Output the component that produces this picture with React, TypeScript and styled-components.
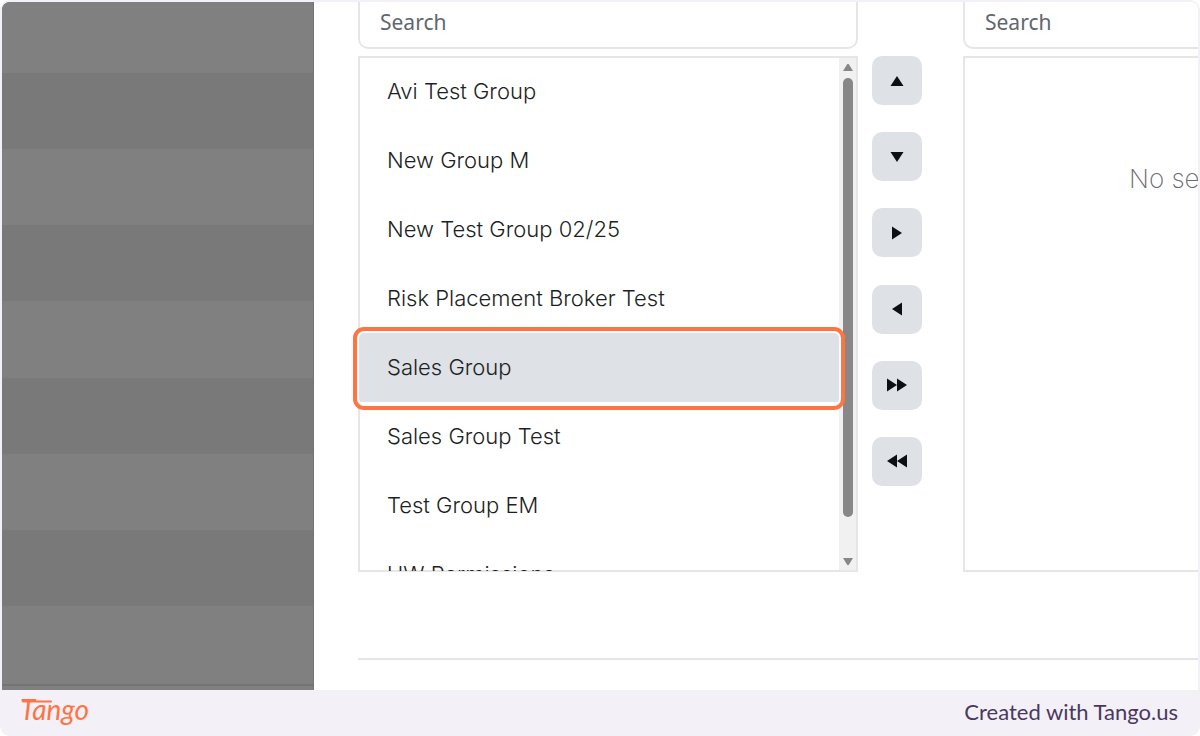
import React from "react";
import styled, { createGlobalStyle } from "styled-components";

const GlobalStyle = createGlobalStyle`
  *, *::before, *::after { box-sizing: border-box; }
  body { margin: 0; background: #fff; font-family: Inter, sans-serif; }
`;

const Frame = styled.div`
  display: flex;
  flex-direction: column;
  min-height: 100vh;
  padding: 2px 2px 0;
  background: #f3f1f7;
  border-radius: 10px;
`;

const Stage = styled.div`
  display: flex;
  flex: 1;
  background: #fff;
  border-radius: 8px 8px 0 0;
  overflow: hidden;
`;

const Backdrop = styled.div`
  display: grid;
  flex: 0 0 312px;
  grid-template-rows: 71px repeat(7, 1fr) 78px 6px;
  background: #808080;
  border-right: 1px solid #747474;
`;

const Stripe = styled.div<{ $dark?: boolean; $ruled?: boolean }>`
  background: ${(p) => (p.$dark ? "#797979" : "#808080")};
  border-top: ${(p) => (p.$ruled ? "2px solid #747474" : "0")};
`;

const Dialog = styled.main`
  flex: 1;
  min-width: 0;
  padding-left: 44px;
`;

const Transfer = styled.div`
  display: grid;
  grid-template-columns: minmax(0, 1fr) 50px 262px;
  column-gap: 14px;
  padding-bottom: 86px;
  border-bottom: 2px solid #e2e6eb;
`;

const Pane = styled.section<{ $cut?: boolean }>`
  display: flex;
  flex-direction: column;
  gap: 7px;
  margin-left: ${(p) => (p.$cut ? "27px" : "0")};
`;

const SearchBox = styled.input<{ $cut?: boolean }>`
  width: 100%;
  height: 47px;
  padding: 0 20px 5px;
  border: 2px solid #e6e6e6;
  border-top: 0;
  border-right-width: ${(p) => (p.$cut ? "0" : "2px")};
  border-radius: ${(p) => (p.$cut ? "0 0 0 10px" : "0 0 10px 10px")};
  outline: 0;
  background: #fff;
  font: 400 21px "Noto Sans", sans-serif;
  &::placeholder { color: #5f666d; opacity: 1; }
`;

const Box = styled.div<{ $cut?: boolean }>`
  display: flex;
  height: 516px;
  border: ${(p) => (p.$cut ? "2px" : "1px")} solid #e6e6e6;
  border-right-width: ${(p) => (p.$cut ? "0" : "1px")};
  box-shadow: ${(p) => (p.$cut ? "none" : "inset 0 0 0 1px #e6e6e6")};
`;

const Options = styled.ul`
  flex: 1;
  margin: 0;
  padding: 0;
  list-style: none;
  overflow-x: visible;
  overflow-y: clip;
`;

const Option = styled.li`
  position: relative;
  height: 69px;
  padding-left: 28px;
  font-size: 22px;
  font-weight: 300;
  line-height: 68px;
  color: #1c1f23;
  &[aria-selected="true"] { background: #dee1e6; }
`;

const Highlight = styled.span`
  position: absolute;
  z-index: 1;
  inset: -6px -6px -8px;
  border: 4px solid #ff7442;
  border-radius: 11px;
  box-shadow: inset 0 0 0 2px #fff;
`;

const ScrollTrack = styled.div`
  display: flex;
  flex: 0 0 17px;
  flex-direction: column;
  align-items: center;
  gap: 6px;
  margin: 1px 1px 1px 0;
  padding: 5px 0 4px;
  background: #f1f1f1;
`;

const ScrollThumb = styled.div`
  width: 10px;
  height: 439px;
  margin-bottom: auto;
  border-radius: 5px;
  background: #878787;
`;

const Moves = styled.div`
  display: flex;
  flex-direction: column;
  justify-content: space-between;
  height: 430px;
  margin-top: 54px;
`;

const MoveButton = styled.button`
  display: grid;
  place-items: center;
  height: 49px;
  padding: 0;
  border: 0;
  border-radius: 10px;
  background: #dee1e6;
  color: #0d0f12;
`;

const Empty = styled.p`
  margin: 0;
  padding: 101px 0 0 164px;
  font-size: 26px;
  font-weight: 200;
  line-height: 40px;
  white-space: nowrap;
  color: #6c6c72;
`;

const Footer = styled.footer`
  display: flex;
  align-items: center;
  justify-content: space-between;
  height: 46px;
  padding: 0 20px 0 18px;
`;

const Logo = styled.svg`
  display: block;
  fill: #ff7442;
  stroke: #ff7442;
`;

const Credit = styled.a`
  padding-bottom: 4px;
  font: 400 22px Lato, sans-serif;
  color: #4a3860;
  text-decoration: none;
`;

const groups = [
  "Avi Test Group",
  "New Group M",
  "New Test Group 02/25",
  "Risk Placement Broker Test",
  "Sales Group",
  "Sales Group Test",
  "Test Group EM",
  "UW Permissions",
];

const moves = [
  { label: "Move up", d: "M12 7 L18.500 17 H5.500 Z" },
  { label: "Move down", d: "M12 17 L5.500 7 H18.500 Z" },
  { label: "Add", d: "M7 5.500 L17 12 L7 18.500 Z" },
  { label: "Remove", d: "M17 5.500 L7 12 L17 18.500 Z" },
  { label: "Add all", d: "M2 5.500 L12 12 L2 18.500 Z M12 5.500 L22 12 L12 18.500 Z" },
  { label: "Remove all", d: "M12 5.500 L2 12 L12 18.500 Z M22 5.500 L12 12 L22 18.500 Z" },
];

const Arrow = ({ down }: { down?: boolean }) => (
  <svg width="12" height="9" viewBox="0 0 12 9" fill="#878787" aria-hidden="true">
    <path d={down ? "M1 1 H11 L7 7.500 Q6 9 5 7.500 Z" : "M1 8 H11 L7 1.500 Q6 0 5 1.500 Z"} />
  </svg>
);

export default function App() {
  return (
    <Frame>
      <GlobalStyle />
      <Stage>
        <Backdrop>
          {[0, 1, 2, 3, 4, 5, 6, 7, 8].map((i) => (
            <Stripe key={i} $dark={i % 2 === 1} />
          ))}
          <Stripe $ruled />
        </Backdrop>
        <Dialog>
          <Transfer>
            <Pane>
              <SearchBox type="text" placeholder="Search" aria-label="Search available groups" />
              <Box>
                <Options role="listbox" aria-label="Available groups">
                  {groups.map((name) => (
                    <Option key={name} role="option" aria-selected={name === "Sales Group"}>
                      {name}
                      {name === "Sales Group" && <Highlight />}
                    </Option>
                  ))}
                </Options>
                <ScrollTrack>
                  <Arrow />
                  <ScrollThumb />
                  <Arrow down />
                </ScrollTrack>
              </Box>
            </Pane>
            <Moves>
              {moves.map((m) => (
                <MoveButton key={m.label} type="button" aria-label={m.label}>
                  <svg width="24" height="24" viewBox="0 0 24 24" fill="currentColor" aria-hidden="true">
                    <path d={m.d} />
                  </svg>
                </MoveButton>
              ))}
            </Moves>
            <Pane $cut>
              <SearchBox $cut type="text" placeholder="Search" aria-label="Search selected groups" />
              <Box $cut>
                <Empty>No se</Empty>
              </Box>
            </Pane>
          </Transfer>
        </Dialog>
      </Stage>
      <Footer>
        <Logo width="76" height="40" viewBox="0 0 76 40" role="img" aria-label="Tango">
          <path d="M3 8.500 H31" strokeWidth="2" strokeLinecap="round" />
          <text x="0" y="27" fontFamily="Lato, sans-serif" fontSize="28" fontStyle="italic" fontWeight="400" stroke="none">
            Tango
          </text>
        </Logo>
        <Credit href="#tango">Created with Tango.us</Credit>
      </Footer>
    </Frame>
  );
}
